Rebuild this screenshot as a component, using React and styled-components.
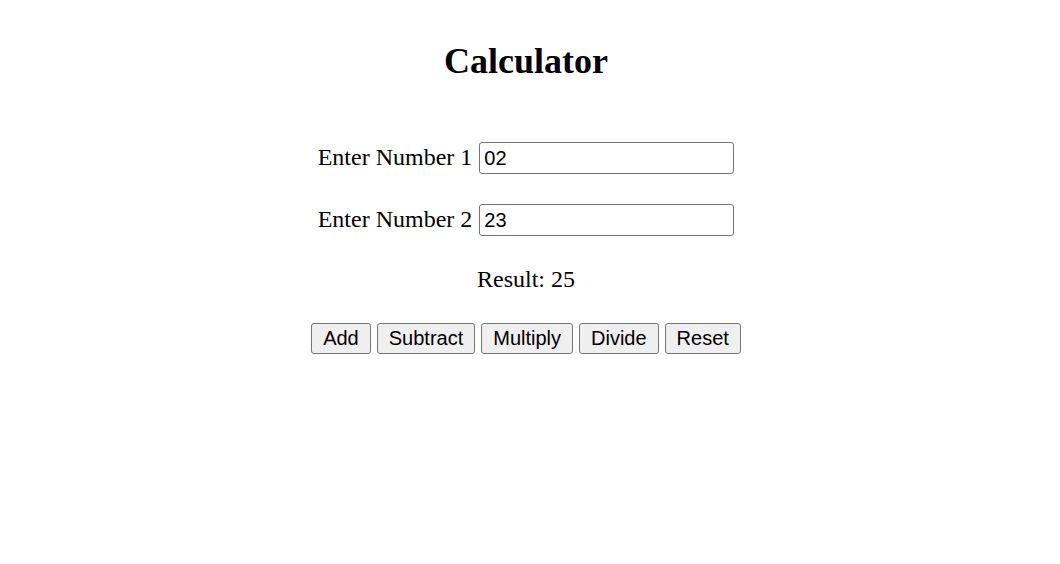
import React, { useState } from "react";
import styled, { createGlobalStyle } from "styled-components";

const GlobalStyle = createGlobalStyle`
  body {
    margin: 0;
    background: #fff;
    font-family: "Liberation Serif", "Times New Roman", serif;
    color: #000;
  }
`;

const Page = styled.div`
  width: 1052px;
  display: flex;
  flex-direction: column;
  align-items: center;
  padding-top: 41px;
`;

const Title = styled.h1`
  margin: 0 0 60px;
  font-size: 36px;
  font-weight: bold;
  line-height: 41px;
`;

const Row = styled.div`
  display: flex;
  align-items: center;
  gap: 7px;
  margin-bottom: 30px;
  font-size: 24px;
`;

const Label = styled.label`
  line-height: 28px;
  padding-bottom: 2px;
`;

const NumberInput = styled.input`
  box-sizing: border-box;
  width: 255px;
  height: 32px;
  padding: 3px 4px;
  font-family: "Liberation Sans", Arial, sans-serif;
  font-size: 20px;
  color: #000;
  border: 1px solid #767676;
  border-radius: 3px;
  outline: none;
`;

const Result = styled.div`
  font-size: 24px;
  line-height: 26px;
  margin-bottom: 31px;
`;

const ButtonBar = styled.div`
  display: flex;
  gap: 6px;
`;

const Button = styled.button`
  box-sizing: border-box;
  height: 31px;
  padding: 2px 11px 2px 11px;
  font-family: "Liberation Sans", Arial, sans-serif;
  font-size: 20px;
  color: #000;
  background: #efefef;
  border: 1px solid #767676;
  border-radius: 3px;
`;

export default function App() {
    const [a, setA] = useState("02");
    const [b, setB] = useState("23");
    const [result, setResult] = useState(25);

    const run = (fn) => setResult(fn(Number(a), Number(b)));

    return (
        <Page>
            <GlobalStyle />
            <Title>Calculator</Title>
            <Row>
                <Label htmlFor="num1">Enter Number 1</Label>
                <NumberInput id="num1" value={a} onChange={e => setA(e.target.value)} />
            </Row>
            <Row>
                <Label htmlFor="num2">Enter Number 2</Label>
                <NumberInput id="num2" value={b} onChange={e => setB(e.target.value)} />
            </Row>
            <Result>Result: {result}</Result>
            <ButtonBar>
                <Button onClick={() => run((x, y) => x + y)}>Add</Button>
                <Button onClick={() => run((x, y) => x - y)}>Subtract</Button>
                <Button onClick={() => run((x, y) => x * y)}>Multiply</Button>
                <Button onClick={() => run((x, y) => x / y)}>Divide</Button>
                <Button onClick={() => { setA(""); setB(""); setResult(0); }}>Reset</Button>
            </ButtonBar>
        </Page>
    );
}
